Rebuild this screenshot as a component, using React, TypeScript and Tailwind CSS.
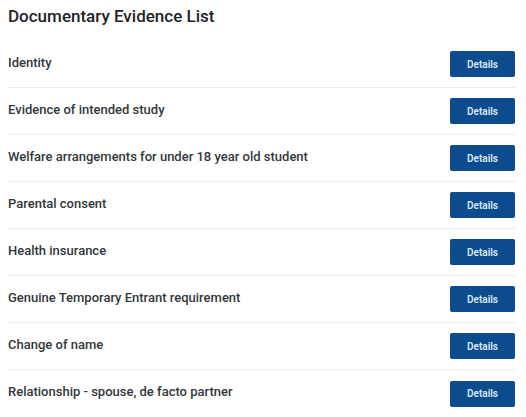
const items = [
  "Identity",
  "Evidence of intended study",
  "Welfare arrangements for under 18 year old student",
  "Parental consent",
  "Health insurance",
  "Genuine Temporary Entrant requirement",
  "Change of name",
  "Relationship - spouse, de facto partner",
];

export default function App() {
  return (
    <div className="w-[526px] h-[417px] bg-white pl-[8px] pr-[11px] font-['Roboto',sans-serif] overflow-hidden">
      <h1 className="h-[41px] pt-[4px] text-[17px] leading-[24px] font-medium text-[#1f2328]">
        Documentary Evidence List
      </h1>
      <div>
        {items.map((item, i) => (
          <div
            key={item}
            className={`flex items-center justify-between h-[47px] ${
              i < items.length - 1 ? "border-b border-[#ececec]" : ""
            }`}
          >
            <span className="text-[13px] font-medium text-[#33373b] -mt-[3px]">{item}</span>
            <button className="w-[65px] h-[26px] rounded-[2px] bg-[#0c4c8e] text-[10px] font-semibold text-[#dbe8f6]">
              Details
            </button>
          </div>
        ))}
      </div>
    </div>
  );
}
